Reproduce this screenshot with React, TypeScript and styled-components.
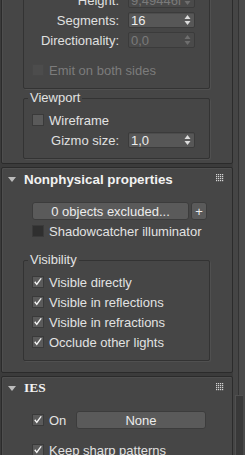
import React from 'react';
import styled, { createGlobalStyle, css } from 'styled-components';

const Global = createGlobalStyle`
  html, body { margin: 0; padding: 0; background: #3b3b3b; }
  body {
    width: 245px; height: 455px; overflow: hidden;
    font-family: "Liberation Sans", Arial, sans-serif;
    font-size: 13px; color: #dedede;
  }
  * { box-sizing: border-box; }
`;

const Frame = styled.div`
  display: flex;
  width: 245px;
  height: 455px;
  overflow: hidden;
  background: #3b3b3b;
`;

const Column = styled.div`
  width: 233px;
  flex: none;
  padding-left: 1px;
  margin-top: -30px;
  display: flex;
  flex-direction: column;
  gap: 3px;
`;

const Rollout = styled.section<{ $pb: number; $pt?: number }>`
  border: 1px solid #2b2b2b;
  border-radius: 2px;
  background: #464646;
  box-shadow: inset 1px 1px 0 #4e4e4e;
  padding: ${(p) => p.$pt ?? 0}px 0 ${(p) => p.$pb}px;
  display: flex;
  flex-direction: column;
`;

const Header = styled.div`
  height: 22px;
  display: flex;
  align-items: center;
  padding: 0 8px 0 6px;
`;

const Triangle = styled.span`
  width: 0; height: 0;
  border-left: 4px solid transparent;
  border-right: 4px solid transparent;
  border-top: 5px solid #bcbcbc;
  margin-right: 8px;
`;

const Title = styled.span<{ $serif?: boolean }>`
  font-weight: bold;
  font-size: 13.4px;
  color: #f2f2f2;
  font-family: ${(p) => (p.$serif ? '"Liberation Serif", "Times New Roman", serif' : '"Liberation Sans", Arial, sans-serif')};
`;

const GripBox = styled.span`
  margin-left: auto;
  display: flex;
  margin-top: -2px;
`;

const Grip = () => (
  <GripBox>
    <svg width="8" height="8" viewBox="0 0 8 8">
      {[0, 2, 4, 6].map((y) =>
        [0, 2, 4, 6].map((x) => <rect key={`${x}-${y}`} x={x} y={y} width="1.2" height="1.2" fill="#d4d4d4" />)
      )}
    </svg>
  </GripBox>
);

const Group = styled.div`
  width: 187px;
  margin: 4px 0 0 21px;
  border: 1px solid #333;
  border-radius: 2px;
  box-shadow: 1px 1px 0 #505050;
  padding: 14px 0 8px;
`;

const FieldGroup = styled.fieldset<{ $mt: number }>`
  width: 187px;
  margin: ${(p) => p.$mt}px 0 0 21px;
  border: 1px solid #333;
  border-radius: 2px;
  box-shadow: 1px 1px 0 #505050;
  padding: 5px 0 8px;
  min-inline-size: 0;
`;

const Legend = styled.legend`
  margin-left: 4px;
  padding: 0 2px;
  line-height: 14px;
  font-size: 13px;
  color: #e2e2e2;
`;

const SpinRow = styled.div`
  display: grid;
  grid-template-columns: 95px 67px;
  column-gap: 9px;
  align-items: center;
  height: 20px;
`;

const Label = styled.span`
  text-align: right;
  white-space: nowrap;
  color: #e0e0e0;
`;

const Field = styled.div<{ $disabled?: boolean }>`
  height: 16px;
  display: flex;
  align-items: center;
  justify-content: space-between;
  padding: 0 3px 0 2px;
  border: 1px solid #3b3b3b;
  border-radius: 2px;
  background: ${(p) => (p.$disabled ? '#4a4a4a' : '#575757')};
  color: ${(p) => (p.$disabled ? '#7a7a7a' : '#ececec')};
  ${(p) =>
    !p.$disabled &&
    css`
      box-shadow: inset 0 1px 0 #4c4c4c;
    `}
`;

const Spinner = ({ value, disabled }: { value: string; disabled?: boolean }) => (
  <Field $disabled={disabled}>
    <span>{value}</span>
    <svg width="7" height="12" viewBox="0 0 7 12">
      <path d="M0.5 5 L3.5 1 L6.5 5 Z" fill={disabled ? '#6e6e6e' : '#dcdcdc'} />
      <path d="M0.5 7 L3.5 11 L6.5 7 Z" fill={disabled ? '#6e6e6e' : '#dcdcdc'} />
    </svg>
  </Field>
);

const CheckRow = styled.div<{ $pl: number; $mt?: number; $disabled?: boolean }>`
  height: 20px;
  display: flex;
  align-items: center;
  gap: 5px;
  padding-left: ${(p) => p.$pl}px;
  margin-top: ${(p) => p.$mt ?? 0}px;
  color: ${(p) => (p.$disabled ? '#7c7c7c' : '#e2e2e2')};
  white-space: nowrap;
`;

type BoxKind = 'plain' | 'dark' | 'disabled';

const Box = styled.span<{ $kind: BoxKind }>`
  width: 12px;
  height: 12px;
  flex: none;
  display: flex;
  align-items: center;
  justify-content: center;
  border: 1px solid ${(p) => (p.$kind === 'disabled' ? '#474747' : '#3a3a3a')};
  background: ${(p) => (p.$kind === 'dark' ? '#2f2f2f' : p.$kind === 'disabled' ? '#4c4c4c' : '#5a5a5a')};
`;

const Check = ({ checked, kind = 'plain' }: { checked?: boolean; kind?: BoxKind }) => (
  <Box $kind={kind}>
    {checked && (
      <svg width="10" height="10" viewBox="0 0 10 10">
        <path d="M1.2 5.2 L3.8 8.4 L8.8 1.4 L7.6 1 L3.7 6.3 L2.4 4.3 Z" fill="#f4f4f4" />
      </svg>
    )}
  </Box>
);

const ButtonRow = styled.div<{ $mt: number }>`
  display: flex;
  align-items: center;
  gap: 2px;
  padding-left: 30px;
  margin-top: ${(p) => p.$mt}px;
`;

const Button = styled.div<{ $w: number }>`
  width: ${(p) => p.$w}px;
  height: 18px;
  display: flex;
  align-items: center;
  justify-content: center;
  border: 1px solid #3c3c3c;
  border-radius: 3px;
  background: #5a5a5a;
  color: #ececec;
  white-space: nowrap;
`;

const OnRow = styled.div<{ $mt: number }>`
  display: flex;
  align-items: center;
  height: 20px;
  padding-left: 30px;
  margin-top: ${(p) => p.$mt}px;
  color: #e2e2e2;
`;

const OnLabel = styled.span`
  margin-left: 5px;
  width: 27px;
`;

const Scrollbar = styled.div`
  width: 12px;
  flex: none;
  display: flex;
  flex-direction: column;
  background: linear-gradient(to right, #454545 0 5px, #333 5px 6px, #4a4a4a 6px);
`;

const Thumb = styled.div`
  margin: 395px 0 0 2px;
  width: 8px;
  flex: 1;
  background: #393939;
  border-left: 1px solid #505050;
  border-top: 1px solid #505050;
`;

export default function App() {
  return (
    <>
      <Global />
      <Frame>
        <Column>
          <Rollout $pb={4}>
            <Group>
              <SpinRow>
                <Label>Height:</Label>
                <Spinner value="9,49446i" disabled />
              </SpinRow>
              <SpinRow>
                <Label>Segments:</Label>
                <Spinner value="16" />
              </SpinRow>
              <SpinRow>
                <Label>Directionality:</Label>
                <Spinner value="0,0" disabled />
              </SpinRow>
              <CheckRow $pl={8} $mt={10} $disabled>
                <Check kind="disabled" />
                Emit on both sides
              </CheckRow>
            </Group>
            <FieldGroup $mt={2}>
              <Legend>Viewport</Legend>
              <CheckRow $pl={8}>
                <Check />
                Wireframe
              </CheckRow>
              <SpinRow>
                <Label>Gizmo size:</Label>
                <Spinner value="1,0" />
              </SpinRow>
            </FieldGroup>
          </Rollout>

          <Rollout $pb={11}>
            <Header>
              <Triangle />
              <Title>Nonphysical properties</Title>
              <Grip />
            </Header>
            <ButtonRow $mt={12}>
              <Button $w={157}>0 objects excluded...</Button>
              <Button $w={16}>+</Button>
            </ButtonRow>
            <CheckRow $pl={30} $mt={1}>
              <Check kind="dark" />
              Shadowcatcher illuminator
            </CheckRow>
            <FieldGroup $mt={12}>
              <Legend>Visibility</Legend>
              <CheckRow $pl={8}>
                <Check checked />
                Visible directly
              </CheckRow>
              <CheckRow $pl={8}>
                <Check checked />
                Visible in reflections
              </CheckRow>
              <CheckRow $pl={8}>
                <Check checked />
                Visible in refractions
              </CheckRow>
              <CheckRow $pl={8}>
                <Check checked />
                Occlude other lights
              </CheckRow>
            </FieldGroup>
          </Rollout>

          <Rollout $pb={20}>
            <Header>
              <Triangle />
              <Title $serif>IES</Title>
              <Grip />
            </Header>
            <OnRow $mt={11}>
              <Check checked />
              <OnLabel>On</OnLabel>
              <Button $w={130}>None</Button>
            </OnRow>
            <CheckRow $pl={30} $mt={10}>
              <Check checked />
              Keep sharp patterns
            </CheckRow>
          </Rollout>
        </Column>
        <Scrollbar>
          <Thumb />
        </Scrollbar>
      </Frame>
    </>
  );
}
